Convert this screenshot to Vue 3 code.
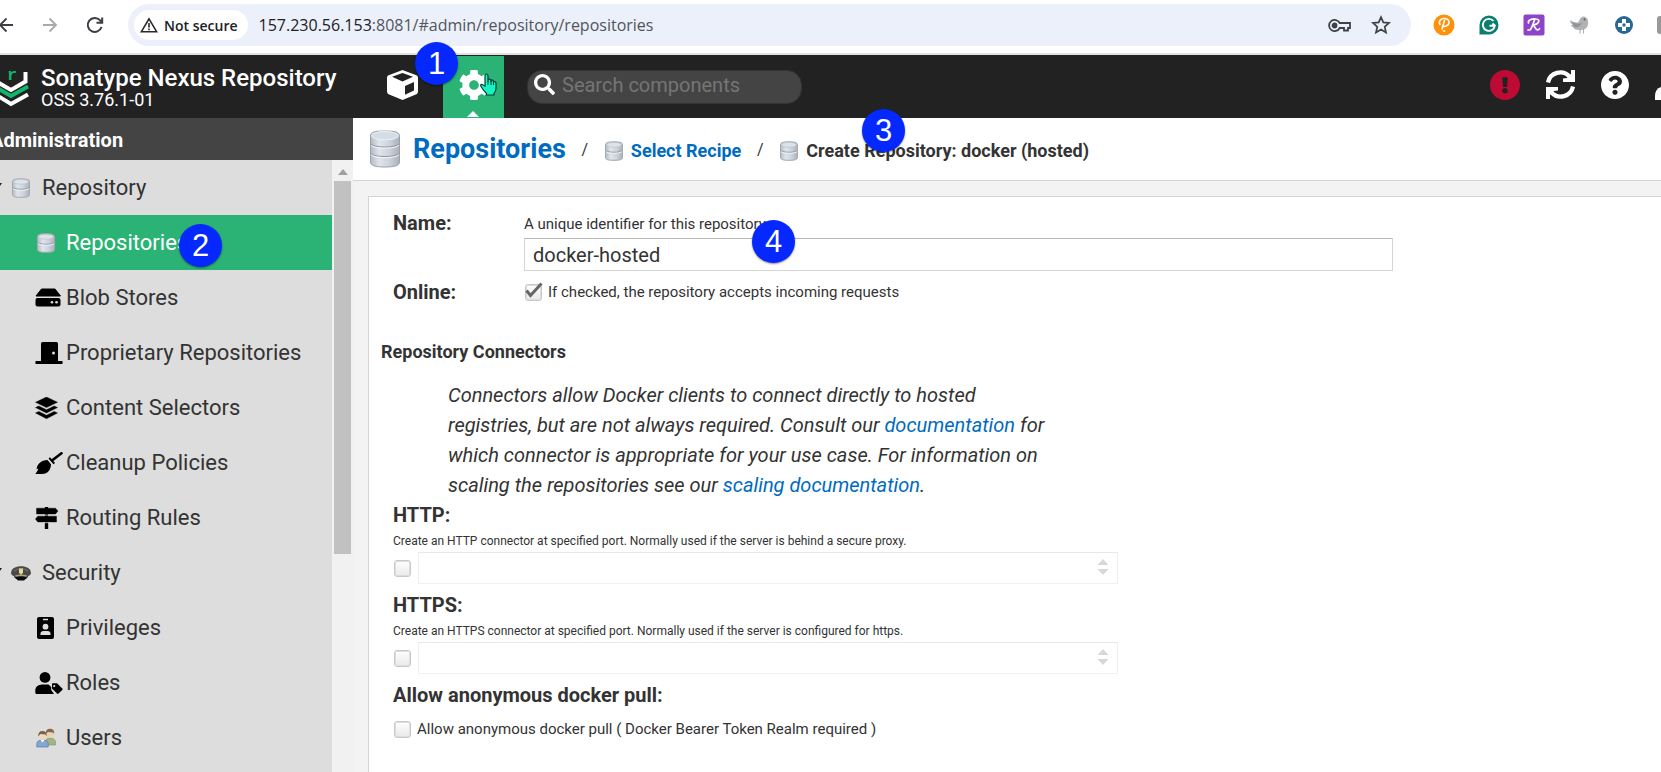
<script setup>
import { ref } from 'vue'

const search = ref('')
const name = ref('docker-hosted')
const online = ref(true)
const anonymous = ref(false)

const menu = [
  { label: 'Repository', icon: 'db', group: true },
  { label: 'Repositories', icon: 'db', active: true },
  { label: 'Blob Stores', icon: 'drive' },
  { label: 'Proprietary Repositories', icon: 'door' },
  { label: 'Content Selectors', icon: 'layers' },
  { label: 'Cleanup Policies', icon: 'broom' },
  { label: 'Routing Rules', icon: 'signs' },
  { label: 'Security', icon: 'cap', group: true },
  { label: 'Privileges', icon: 'badge' },
  { label: 'Roles', icon: 'role' },
  { label: 'Users', icon: 'users' },
]

const connectors = ref([
  {
    id: 'http',
    title: 'HTTP:',
    hint: 'Create an HTTP connector at specified port. Normally used if the server is behind a secure proxy.',
    enabled: false,
  },
  {
    id: 'https',
    title: 'HTTPS:',
    hint: 'Create an HTTPS connector at specified port. Normally used if the server is configured for https.',
    enabled: false,
  },
])
</script>

<template>
  <div class="page">
    <svg class="defs" aria-hidden="true">
      <defs>
        <linearGradient id="metal" x1="0" x2="1">
          <stop offset="0" stop-color="#b3bac4" />
          <stop offset=".3" stop-color="#e0e5eb" />
          <stop offset=".65" stop-color="#ccd3dc" />
          <stop offset="1" stop-color="#a9b0ba" />
        </linearGradient>
        <symbol id="db" viewBox="0 0 20 20">
          <path d="M1.500 4C1.500 1.500 4 .8 10 .8S18.500 1.500 18.500 4V16.500C18.500 18.600 16 19.300 10 19.300S1.500 18.600 1.500 16.500Z" fill="url(#metal)" stroke="#a3a9b1" />
          <ellipse cx="10" cy="3.800" rx="7.500" ry="2.400" fill="#dce3e9" stroke="#b9c0c8" stroke-width=".7" />
          <path d="M2 9.500C3.500 11.800 16.500 11.800 18 9.500" fill="none" stroke="#959ca6" />
          <path d="M2 10.600C3.500 12.900 16.500 12.900 18 10.600" fill="none" stroke="#eef1f5" />
        </symbol>
        <symbol id="db-large" viewBox="0 0 32 38">
          <path d="M1.500 6C1.500 2 6 1 16 1S30.500 2 30.500 6V32C30.500 35.500 26 37 16 37S1.500 35.500 1.500 32Z" fill="url(#metal)" stroke="#9aa1aa" />
          <ellipse cx="16" cy="5.700" rx="13.500" ry="4.200" fill="#d5dde4" stroke="#eef1f4" />
          <path d="M2 14C5 18 27 18 30 14M2 23.500C5 27.500 27 27.500 30 23.500" fill="none" stroke="#8f97a2" />
          <path d="M2 15.200C5 19.200 27 19.200 30 15.200M2 24.700C5 28.700 27 28.700 30 24.700" fill="none" stroke="#f3f5f8" />
        </symbol>
        <symbol id="drive" viewBox="0 0 28 22">
          <path d="M6.500 2H20L25.500 9H1Z" stroke="#000" stroke-linejoin="round" />
          <rect x=".5" y="11" width="25" height="8.500" rx="2" />
          <circle cx="17" cy="15.200" r="1.300" fill="#ddd" /><circle cx="21.500" cy="15.200" r="1.300" fill="#ddd" />
        </symbol>
        <symbol id="door" viewBox="0 0 28 22">
          <path fill-rule="evenodd" d="M6 1.500A1.500 1.500 0 0 1 7.500 0H21.500A1.500 1.500 0 0 1 23 1.500V19H27.500V22H.5V19H6ZM18.500 9.500A1.500 1.500 0 1 0 18.500 12.500 1.500 1.500 0 0 0 18.500 9.500Z" />
        </symbol>
        <symbol id="layers" viewBox="0 0 28 22">
          <path d="M11.500 0L22.500 5.300 11.500 10.600 .5 5.300ZM.5 10.600L3.800 9 11.500 12.800 19.200 9 22.500 10.600 11.500 16ZM.5 16L3.800 14.400 11.500 18.200 19.200 14.400 22.500 16 11.500 21.700Z" stroke="#000" stroke-width=".4" stroke-linejoin="round" />
        </symbol>
        <symbol id="broom" viewBox="0 0 28 22">
          <path d="M17 8.500L26.500 1.300" stroke="#000" stroke-width="2.600" stroke-linecap="round" />
          <path d="M13.500 6.500L18.500 12.300 20 11 15 5.200ZM12.500 8L16 12.200C16 17 13 22 7 22H.3C1.500 20.500 3 18 3.500 16.500L1.600 17.300C2 12 6.500 8 12.500 8Z" />
        </symbol>
        <symbol id="signs" viewBox="0 0 28 22">
          <path d="M10 0H13V1.200H20.500L23 4.100 20.500 7H13V9.200H21.500V15H13V22H10V15H2.800L.4 12.100 2.800 9.200H10V7H1.500V1.200H10Z" stroke="#000" stroke-width=".4" />
          <path d="M8 8.100H15M8 15.700H15" stroke="#ddd" stroke-width=".8" />
        </symbol>
        <symbol id="badge" viewBox="0 0 28 22">
          <path fill-rule="evenodd" d="M4 0H17A2 2 0 0 1 19 2V20A2 2 0 0 1 17 22H4A2 2 0 0 1 2 20V2A2 2 0 0 1 4 0ZM8 1.800V3.200H13V1.800ZM10.500 6.800A2.900 2.900 0 1 0 10.500 12.600 2.900 2.900 0 0 0 10.500 6.800ZM5.500 18H15.500V16.500Q15.500 14 12.500 14H8.500Q5.500 14 5.500 16.500Z" />
        </symbol>
        <symbol id="role" viewBox="0 0 28 22">
          <circle cx="10" cy="5.400" r="5.400" />
          <path d="M7 12.500H13.500L16.200 15V18L19 22H2A1.500 1.500 0 0 1 .3 20.500V18Q.5 13 7 12.500Z" />
          <path fill-rule="evenodd" d="M17.500 11.300H22L27.300 16.600Q28 17.300 27.300 18L23.500 21.600Q22.800 22.300 22 21.600L17 16.600V12ZM19.200 13A1.100 1.100 0 1 0 19.200 15.200 1.100 1.100 0 0 0 19.200 13Z" />
        </symbol>
        <symbol id="cap" viewBox="0 0 20 20">
          <ellipse cx="10" cy="13" rx="7" ry="4" fill="#222" />
          <path d="M0 9.500C1 4.500 6 3.300 10 3.300S19 4.500 20 9.500C20 13 16 14 10 14S0 13 0 9.500Z" fill="#4b4a47" />
          <path d="M3 8Q10 3 17 8" fill="none" stroke="#77756f" />
          <path d="M4 12.600Q10 10.500 16 12.600L15.500 13.800Q10 12 4.500 13.800Z" fill="#b5a274" />
          <path d="M4 14.500Q10 12.500 16 14.500L13 17.500H7Z" fill="#0c0c0d" />
          <path d="M8 5.500H12L12 9.500 10 12 8 9.500Z" fill="#dfd9a0" />
        </symbol>
        <symbol id="users" viewBox="0 0 20 20">
          <path d="M9.500 17V13Q10 10 14 10T19.500 13V17Z" fill="#9fb585" stroke="#7f9566" stroke-width=".6" />
          <circle cx="14" cy="5.800" r="4" fill="#ead3b8" />
          <path d="M9.800 6Q9.500 .8 14 .8T18.300 6L17 4.500 12 4Z" fill="#87674a" />
          <path d="M.8 19V15.500Q1 12 6.500 12T12.200 15.500V19Z" fill="#84a7d4" stroke="#587eae" stroke-width=".7" />
          <path d="M4.500 12L6.500 14.500 8.500 12Z" fill="#fff" />
          <circle cx="6.500" cy="8" r="4" fill="#eed9c2" />
          <path d="M2.200 8.500Q2 3 6.500 3T10.800 8.500L9.500 6.500 4.500 6Z" fill="#806044" />
        </symbol>
      </defs>
    </svg>

    <div class="browser">
      <button class="nav" aria-label="Back">
        <svg width="16" height="16" viewBox="0 0 16 16" fill="none" stroke="#3c3f43" stroke-width="1.800"><path d="M15 8H2M8.500 1.500L2 8l6.500 6.500" /></svg>
      </button>
      <button class="nav forward" aria-label="Forward">
        <svg width="16" height="16" viewBox="0 0 16 16" fill="none" stroke="#a8a9ab" stroke-width="1.800"><path d="M1 8h13M7.500 1.500L14 8l-6.500 6.500" /></svg>
      </button>
      <button class="nav reload" aria-label="Reload">
        <svg width="18" height="18" viewBox="0 0 18 18" fill="none" stroke="#3c3f43" stroke-width="2"><path d="M15.500 11A7 7 0 1 1 14 4.200L16 6.200M16.200 1.500V6.800H10.500" /></svg>
      </button>
      <div class="omnibox">
        <button class="chip">
          <svg width="18" height="16" viewBox="0 0 18 16" fill="none" stroke="#28292c" stroke-width="1.600"><path d="M9 1.800L16.600 14.700H1.400ZM9 6v4.500M9 11.500v1.800" /></svg>
          <span>Not secure</span>
        </button>
        <span class="url">157.230.56.153<span>:8081/#admin/repository/repositories</span></span>
        <svg class="key" width="23" height="14" viewBox="0 0 23 14" fill="none" stroke="#3f4247" stroke-width="1.800"><path d="M11.700 5H22v5h-2v2.500h-4V10h-4.300A5.600 5.600 0 1 1 11.700 5Z" /><circle cx="6.500" cy="7.500" r="2" fill="#3f4247" /></svg>
        <svg width="20" height="20" viewBox="0 0 20 20" fill="none" stroke="#3f4247" stroke-width="1.700"><path d="M10 2.200L12.300 7.400 18 8 13.700 11.800 15 17.500 10 14.500 5 17.500 6.300 11.800 2 8 7.700 7.400Z" /></svg>
      </div>
      <div class="extensions">
        <svg width="22" height="22" viewBox="0 0 22 22"><circle cx="11" cy="11" r="10.500" fill="#ff900a" /><path d="M7 10.500C5 7 8 4.500 11 4.500 14 4.500 16 6 16 8.500 16 11.500 12 13 9.500 12M11.500 6.500L9 15M10.500 17h1" fill="none" stroke="#fff" stroke-width="1.600" stroke-linecap="round" /></svg>
        <svg width="20" height="20" viewBox="0 0 20 20"><path d="M10 .5A9.500 9.500 0 1 1 10 19.500H.5V10A9.500 9.500 0 0 1 10 .5Z" fill="#0a7f6c" /><path d="M14.500 6A6 6 0 1 0 15.800 10.800H10.500M13.500 8.500L15.900 10.800" fill="none" stroke="#fff" stroke-width="1.900" /></svg>
        <svg width="22" height="22" viewBox="0 0 22 22"><rect x=".5" y=".5" width="21" height="21" rx="2" fill="#8e44c8" /><path d="M5.500 9C4.500 6 9 4.500 13 5 18 5.500 16 10.500 9.500 11M11.500 6C10 10 9 14 7 16H5M10.500 11C12 13 12.500 15.500 14.500 16Q16 16 16.500 14.500" fill="none" stroke="#fff" stroke-width="1.700" stroke-linecap="round" /></svg>
        <svg width="22" height="20" viewBox="0 0 22 20"><path d="M1 5Q5 8 9 7.500C11 6 10 2.500 14 1.500Q18.500 1.500 19 6C20 11 17 15.500 11 15Q5 15 4.500 12.500L1.500 10.500Q4 10 3 9 1 8 1 5Z" fill="#b1b2b4" /><path d="M3 7Q8 10 13 8Q11 13 5 12" fill="#929497" /><circle cx="15.500" cy="4.500" r="1" fill="#555" /><path d="M11 14v4.500M14.500 14v4.500" stroke="#b1b2b4" stroke-width="1.200" /></svg>
        <svg width="18" height="18" viewBox="0 0 18 18"><circle cx="9" cy="9" r="9" fill="#286990" /><path d="M7 3H11V7H15V11H11V15H7V11H3V7H7Z" fill="#fff" /><rect x="7.500" y="7.500" width="3" height="3" fill="#286990" /></svg>
        <span class="next-extension"></span>
      </div>
    </div>

    <header class="header">
      <svg class="logo" width="29" height="38" viewBox="0 0 29 38" fill="none" stroke-width="4"><path d="M-2 12.500L11 20 25.500 11.500V2" stroke="#fff" /><path d="M-2 18.500L11 26 28 16.500" stroke="#0fb66c" /><path d="M-2 26L11 34 28 24.500" stroke="#fff" /><text x="7" y="10" class="logo-letter">r</text></svg>
      <div class="brand">
        <h1>Sonatype Nexus Repository</h1>
        <p>OSS 3.76.1-01</p>
      </div>
      <button class="mode" aria-label="Browse">
        <svg width="31" height="30" viewBox="0 0 31 30"><path d="M15.500 0L30 5.500 31 7V22L30 24 15.500 30 1 24 0 22V7L1 5.500Z" fill="#fff" /><path d="M5 6.800L15.500 3 26 6.800 15.500 11.500ZM18 16L27 12V20.500L18 24.800Z" fill="#222" /></svg>
      </button>
      <button class="mode active" aria-label="Administration">
        <svg width="30" height="30" viewBox="8 8 496 496" fill="#fff"><path d="M487.400 315.700l-42.600-24.600c4.300-23.200 4.300-47 0-70.200l42.600-24.600c4.900-2.800 7.100-8.600 5.500-14-11.100-35.600-30-67.800-54.700-94.600-3.800-4.100-10-5.100-14.800-2.300L380.800 110c-17.900-15.400-38.500-27.300-60.800-35.100V25.800c0-5.600-3.900-10.500-9.400-11.700-36.700-8.200-74.300-7.800-109.200 0-5.500 1.200-9.400 6.100-9.400 11.700V75c-22.200 7.900-42.800 19.800-60.800 35.100L88.700 85.500c-4.900-2.800-11-1.900-14.800 2.300-24.700 26.700-43.600 58.900-54.700 94.600-1.700 5.400.6 11.200 5.500 14L67.300 221c-4.300 23.200-4.300 47 0 70.200l-42.600 24.600c-4.900 2.800-7.100 8.600-5.500 14 11.100 35.600 30 67.800 54.700 94.600 3.800 4.100 10 5.100 14.800 2.300l42.600-24.600c17.900 15.400 38.500 27.300 60.800 35.100v49.200c0 5.600 3.900 10.500 9.400 11.700 36.700 8.200 74.300 7.800 109.200 0 5.500-1.200 9.400-6.100 9.400-11.700v-49.200c22.200-7.900 42.800-19.800 60.800-35.100l42.600 24.600c4.900 2.800 11 1.900 14.800-2.300 24.700-26.700 43.600-58.900 54.700-94.600 1.500-5.500-.7-11.300-5.600-14.100zM256 336c-44.100 0-80-35.900-80-80s35.900-80 80-80 80 35.900 80 80-35.900 80-80 80z" /></svg>
      </button>
      <label class="search">
        <svg width="21" height="21" viewBox="0 0 512 512" fill="#fff"><path d="M505 442.700L405.300 343c-4.500-4.500-10.600-7-17-7H372c27.600-35.300 44-79.700 44-128C416 93.100 322.900 0 208 0S0 93.100 0 208s93.100 208 208 208c48.300 0 92.700-16.400 128-44v16.300c0 6.400 2.500 12.500 7 17l99.700 99.700c9.400 9.400 24.600 9.400 33.900 0l28.300-28.300c9.400-9.400 9.400-24.600.1-34zM208 336c-70.700 0-128-57.200-128-128 0-70.700 57.200-128 128-128 70.700 0 128 57.200 128 128 0 70.700-57.200 128-128 128z" /></svg>
        <input v-model="search" type="text" placeholder="Search components" aria-label="Search components" />
      </label>
      <div class="tools">
        <button aria-label="Alerts"><svg width="30" height="30" viewBox="8 8 496 496" fill="#bd0b33"><path d="M504 256c0 137-111 248-248 248S8 393 8 256C8 119 119 8 256 8s248 111 248 248zm-248 50c-25.400 0-46 20.600-46 46s20.600 46 46 46 46-20.600 46-46-20.600-46-46-46zm-43.700-165.300l7.400 136c.4 6.300 5.600 11.300 12 11.300h48.600c6.300 0 11.600-5 12-11.300l7.400-136c.4-6.900-5.100-12.700-12-12.700h-63.400c-6.900 0-12.300 5.800-12 12.700z" /></svg></button>
        <button aria-label="Refresh"><svg width="29" height="29" viewBox="0 0 29 29" fill="none" stroke="#fff" stroke-width="4.200"><path d="M2 12.500A12.500 12.500 0 0 1 23.500 6.500M27 16.500A12.500 12.500 0 0 1 5.500 22.500" /><path d="M29 0V12H17V8.500L21 8 25 4V0ZM0 29V17H12V20.500L8 21 4 25V29Z" fill="#fff" stroke="none" /></svg></button>
        <button aria-label="Help"><svg width="28" height="28" viewBox="8 8 496 496" fill="#fff"><path d="M504 256c0 137-111 248-248 248S8 393 8 256C8 119 119 8 256 8s248 111 248 248zM262.700 90c-54.500 0-89.300 23-116.600 63.800-3.500 5.200-2.300 12.400 2.700 16.200l34.700 26.300c5.200 4 12.600 3 16.700-2.100 17.900-22.700 30.100-35.800 57.300-35.800 20.400 0 45.700 13.100 45.700 33 0 14.900-12.400 22.600-32.500 33.900C247.100 238.500 216 254.900 216 296v4c0 6.600 5.400 12 12 12h56c6.600 0 12-5.400 12-12v-1.300c0-28.500 83.200-29.700 83.200-106.700 0-58-60.200-102-116.500-102zM256 338c-25.400 0-46 20.600-46 46 0 25.400 20.600 46 46 46s46-20.600 46-46c0-25.400-20.600-46-46-46z" /></svg></button>
        <button class="account" aria-label="Account"><svg width="6" height="30" viewBox="0 0 6 30"><path d="M6 17Q0 19 0 26V30H6Z" fill="#fff" /></svg></button>
      </div>
    </header>

    <div class="body">
      <aside class="side">
        <h2>Administration</h2>
        <div class="side-scroll">
          <nav>
            <a v-for="m in menu" :key="m.label + m.icon" href="#" :class="{ group: m.group, active: m.active }">
              <svg v-if="m.group" class="caret" width="8" height="6" viewBox="0 0 8 6"><path d="M0 0H8L4 6Z" fill="#222" /></svg>
              <svg :class="['icon', m.icon]"><use :href="'#' + m.icon" /></svg>
              <span>{{ m.label }}</span>
            </a>
          </nav>
          <div class="scrollbar">
            <svg width="10" height="6" viewBox="0 0 10 6"><path d="M5 0L10 6H0Z" fill="#a0a0a0" /></svg>
            <div class="thumb"></div>
          </div>
        </div>
      </aside>

      <main>
        <nav class="crumbs">
          <a href="#" class="root"><svg width="32" height="38"><use href="#db-large" /></svg>Repositories</a>
          <span class="slash">/</span>
          <a href="#"><svg width="20" height="20"><use href="#db" /></svg>Select Recipe</a>
          <span class="slash">/</span>
          <span class="current"><svg width="20" height="20"><use href="#db" /></svg>Create Repository: docker (hosted)</span>
        </nav>

        <form class="panel" @submit.prevent>
          <div class="row">
            <label class="label" for="name">Name:</label>
            <div class="field">
              <span class="help">A unique identifier for this repository</span>
              <input id="name" v-model="name" class="text" type="text" />
            </div>
          </div>
          <div class="row online">
            <label class="label" for="online">Online:</label>
            <label class="check"><input id="online" v-model="online" type="checkbox" /><svg v-if="online" class="tick" width="18" height="16" viewBox="0 0 18 16"><path d="M1.500 8.500L5.500 13.500 16.500 1.500" fill="none" stroke="#666" stroke-width="3" /></svg><span>If checked, the repository accepts incoming requests</span></label>
          </div>

          <h3>Repository Connectors</h3>
          <p class="note">
            Connectors allow Docker clients to connect directly to hosted<br />
            registries, but are not always required. Consult our <a href="#">documentation</a> for<br />
            which connector is appropriate for your use case. For information on<br />
            scaling the repositories see our <a href="#">scaling documentation</a>.
          </p>

          <section v-for="c in connectors" :key="c.id" class="connector">
            <label class="label" :for="c.id">{{ c.title }}</label>
            <span class="hint">{{ c.hint }}</span>
            <div class="port">
              <input v-model="c.enabled" type="checkbox" :aria-label="'Enable ' + c.title" />
              <div class="spinner">
                <input :id="c.id" class="text" type="text" :disabled="!c.enabled" />
                <svg class="arrows" width="12" height="16" viewBox="0 0 12 16" fill="#d8d8d8"><path d="M6 0L11.500 6H.5ZM6 16L11.500 10H.5Z" /></svg>
              </div>
            </div>
          </section>

          <section class="connector">
            <label class="label" for="anon">Allow anonymous docker pull:</label>
            <label class="check anon"><input id="anon" v-model="anonymous" type="checkbox" /><span>Allow anonymous docker pull ( Docker Bearer Token Realm required )</span></label>
          </section>
        </form>
      </main>
    </div>

    <span class="marker m1">1</span>
    <span class="marker m2">2</span>
    <span class="marker m3">3</span>
    <span class="marker m4">4</span>
    <svg class="pointer" width="18" height="24" viewBox="0 0 18 24"><path d="M6 13V3Q6 1 7.500 1T9 3V9L9 6.500Q10.500 5.500 12 7V9 7.500Q13.500 6.500 14.500 8V10 9Q16.500 8 17 10V15Q17 18 15 20.500V22H7.500V20.500Q4 17 2 13.500 1 11 3 11.500Z" fill="#14f5c4" stroke="#083c34" stroke-width="1.200" /><path d="M9 8v4M12 8v4M14.500 9v3" stroke="#083c34" /></svg>
  </div>
</template>

<style>
body { background: #f3f3f3; }
</style>

<style scoped>
* { box-sizing: border-box; }
.page {
  position: relative;
  display: flex;
  flex-direction: column;
  height: 100vh;
  overflow: hidden;
  font-family: Roboto, "Liberation Sans", sans-serif;
  color: #333;
}
svg { display: block; flex: none; }
button { padding: 0; border: 0; background: none; font: inherit; }
h1, h2, h3, p { margin: 0; }
a { color: #006bbf; text-decoration: none; }
input { font: inherit; color: inherit; }
.defs { position: absolute; width: 0; height: 0; }

.browser {
  flex: none;
  display: flex;
  align-items: flex-start;
  height: 55px;
  padding-top: 4px;
  border-bottom: 2px solid #dfe1e2;
  background: #fff;
  font-family: "Open Sans", "Noto Sans", sans-serif;
}
.nav { display: flex; align-items: center; height: 42px; margin-left: -2px; }
.nav.forward { margin-left: 28px; }
.nav.reload { margin-left: 28px; }
.omnibox {
  flex: 1;
  display: flex;
  align-items: center;
  gap: 20px;
  height: 42px;
  margin-left: 24px;
  padding: 0 20px 0 6px;
  border-radius: 21px;
  background: #ebf0fa;
}
.chip {
  display: flex;
  align-items: center;
  gap: 6px;
  height: 30px;
  padding: 0 10px 0 6px;
  margin-right: -9px;
  border-radius: 15px;
  background: #fff;
  color: #202124;
  font-size: 14px;
  font-weight: 600;
}
.url { flex: 1; font-size: 16px; color: #202124; white-space: nowrap; }
.url span { color: #51555b; }
.extensions { display: flex; align-items: center; gap: 24px; height: 42px; margin-left: 22px; }
.next-extension { width: 4px; height: 18px; border-radius: 3px 0 0 3px; background: #999; }

.header { flex: none; display: flex; align-items: center; height: 63px; background: #222; color: #fff; }
.logo { margin-top: 4px; }
.logo-letter { font: 700 17px "Liberation Mono", monospace; fill: #0fb66c; stroke: none; }
.brand { width: 331px; margin-left: 12px; }
.brand h1 { font-size: 24px; line-height: 26px; font-weight: 500; white-space: nowrap; }
.brand p { font-size: 18px; line-height: 18px; }
.mode { position: relative; display: flex; align-items: center; justify-content: center; align-self: stretch; width: 61px; margin-right: 10px; padding-bottom: 4px; }
.mode.active { margin: 1px 0 0; background: #2ab374; }
.mode.active::after {
  content: "";
  position: absolute;
  bottom: 1px;
  left: 24px;
  border: 6px solid transparent;
  border-top: 0;
  border-bottom-color: #fff;
}
.search {
  display: flex;
  align-items: center;
  gap: 7px;
  width: 275px;
  height: 34px;
  margin-left: 23px;
  padding: 0 6px 4px;
  border: 1px solid #333;
  border-radius: 15px;
  background: #444;
}
.search input { flex: 1; min-width: 0; padding: 0; border: 0; outline: 0; background: none; color: #fff; font-size: 20px; }
.search input::placeholder { color: #757575; opacity: 1; }
.tools { display: flex; align-items: center; gap: 26px; margin-left: auto; padding-bottom: 4px; }

.body { flex: 1; display: flex; min-height: 0; }
.side { flex: none; display: flex; flex-direction: column; width: 353px; }
.side h2 { flex: none; height: 42px; margin: 0; padding-left: 0; background: #444; color: #fff; font-size: 20px; line-height: 44px; font-weight: 700; text-indent: -10px; overflow: hidden; }
.side-scroll { flex: 1; display: flex; min-height: 0; overflow: hidden; background: #ddd; }
.side nav { flex: 1; }
.side nav a { position: relative; display: flex; align-items: center; height: 55px; padding-left: 35px; color: #333; font-size: 22px; white-space: nowrap; }
.side nav a.group { padding-left: 11px; }
.side nav a.active { background: #2ab374; color: #fff; }
.icon { width: 28px; height: 22px; margin-right: 3px; }
.icon.db, .icon.users, .icon.cap { width: 20px; height: 20px; margin: 0 10px 0 1px; }
.group .icon.db, .group .icon.cap { margin: 0 11px 0 0; }
.caret { position: absolute; left: -6px; top: 23px; }
.scrollbar { flex: none; width: 21px; padding: 9px 2px 0; background: #f1f1f1; }
.scrollbar svg { margin: 0 auto 6px; }
.thumb { height: 373px; background: #c1c1c1; }

main { flex: 1; display: flex; flex-direction: column; min-width: 0; }
.crumbs { flex: none; display: flex; align-items: center; height: 63px; padding-left: 16px; border-bottom: 1px solid #d5d5d5; background: #fff; font-size: 18px; font-weight: 700; }
.crumbs > * { padding-top: 3px; }
.crumbs a, .current { display: flex; align-items: center; gap: 7px; white-space: nowrap; }
.crumbs .root { gap: 12px; padding-top: 0; font-size: 27px; }
.crumbs .slash { width: 38px; padding-top: 0; text-align: center; font-size: 16px; font-weight: 400; }

.panel { flex: 1; margin: 15px 0 0 15px; padding: 14px 24px 0; border: 1px solid #d5d5d5; border-right: 0; border-bottom: 0; background: #fff; }
.row { display: flex; max-width: 1000px; }
.label { font-size: 20px; line-height: 24px; font-weight: 700; }
.row .label { width: 131px; }
.field { flex: 1; }
.help { display: block; height: 27px; font-size: 15px; line-height: 26px; }
.text { display: block; width: 100%; height: 33px; padding: 0 8px; border: 1px solid #d5d5d5; border-top-color: #b8b8b8; background: #fff; font-size: 20px; }
.online { margin-top: 9px; }
.check { position: relative; display: flex; align-items: center; gap: 6px; font-size: 15px; white-space: nowrap; }
input[type="checkbox"] {
  appearance: none;
  flex: none;
  width: 17px;
  height: 17px;
  margin: 0 0 0 1px;
  border: 1px solid #c9c9c9;
  border-radius: 3px;
  background: linear-gradient(#fff, #e9e9e9);
  box-shadow: inset 0 0 0 1px #dedede;
}
.tick { position: absolute; left: 1px; top: 2px; }
h3 { margin: 37px 0 0 -12px; font-size: 18px; line-height: 22px; font-weight: 700; }
.note { margin: 17px 0 0 55px; font-size: 20px; line-height: 30px; font-style: italic; white-space: nowrap; }
.connector { display: flex; flex-direction: column; max-width: 725px; margin-top: 3px; }
.connector + .connector { margin-top: 9px; }
.hint { height: 25px; font-size: 12px; line-height: 28px; white-space: nowrap; }
.port { display: flex; align-items: center; gap: 7px; }
.spinner { position: relative; flex: 1; }
.spinner .text { height: 32px; border-color: #e8e8e8 #f0f0f0 #f0f0f0; }
.arrows { position: absolute; right: 9px; top: 7px; }
.anon { margin-top: 13px; }

.marker {
  position: absolute;
  width: 43px;
  height: 43px;
  border-radius: 50%;
  background: #0528ff;
  box-shadow: 0 1px 2px rgba(0, 0, 0, .45);
  color: #fff;
  font: 31px/43px "Liberation Sans", sans-serif;
  text-align: center;
}
.m1 { left: 415px; top: 42px; }
.m2 { left: 179px; top: 224px; }
.m3 { left: 862px; top: 109px; }
.m4 { left: 752px; top: 220px; }
.pointer { position: absolute; left: 479px; top: 73px; }
</style>
